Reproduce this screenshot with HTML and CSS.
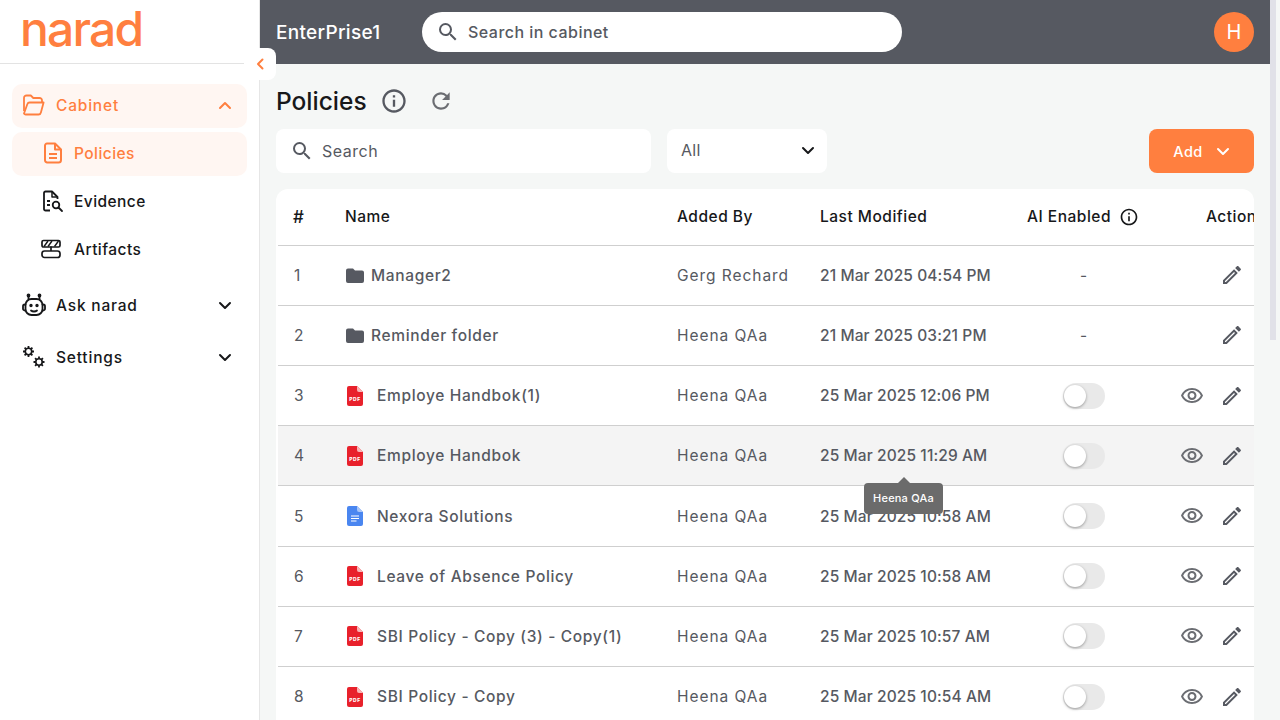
FILE: index.html
```html
<!DOCTYPE html>
<html lang="en">

<head>
    <meta name="viewport" content="width=device-width, initial-scale=1.0" />
    <title>Policies</title>
    <link rel="stylesheet" href="styles.css">
</head>

<body>
    <svg class="defs" width="0" height="0">
        <symbol id="i-folder" viewBox="0 0 18 15"><path fill="#565961" d="M2 0.500h5l2 2h7a2 2 0 0 1 2 2v8.500a2 2 0 0 1-2 2H2a2 2 0 0 1-2-2v-10.500a2 2 0 0 1 2-2z"/></symbol>
        <symbol id="i-pdf" viewBox="0 0 16 20"><path fill="#e8212b" d="M2 0h8l6 6v12a2 2 0 0 1-2 2H2a2 2 0 0 1-2-2V2a2 2 0 0 1 2-2z"/><path fill="#f9b5b5" d="M10 0l6 6h-4a2 2 0 0 1-2-2z"/><text x="8" y="15" font-family="Inter, sans-serif" font-size="5" font-weight="800" fill="#fff" text-anchor="middle">PDF</text></symbol>
        <symbol id="i-doc" viewBox="0 0 16 20"><path fill="#4a86f0" d="M2 0h8l6 6v12a2 2 0 0 1-2 2H2a2 2 0 0 1-2-2V2a2 2 0 0 1 2-2z"/><path fill="#a9c6f8" d="M10 0l6 6h-4a2 2 0 0 1-2-2z"/><path fill="#fff" d="M4 9.500h8v1H4zM4 12h8v1H4zM4 14.500h5.500v1H4z"/></symbol>
        <symbol id="i-eye" viewBox="0 0 24 24"><path fill="#6b6d72" d="M12 6a9.770 9.770 0 0 1 8.820 5.500C19.170 14.870 15.790 17 12 17s-7.170-2.130-8.820-5.500A9.770 9.770 0 0 1 12 6m0-2C7 4 2.730 7.110 1 11.500 2.730 15.890 7 19 12 19s9.270-3.110 11-7.500C21.270 7.110 17 4 12 4zm0 5a2.500 2.500 0 0 1 0 5 2.500 2.500 0 0 1 0-5m0-2c-2.480 0-4.500 2.020-4.500 4.500S9.520 16 12 16s4.500-2.020 4.500-4.500S14.480 7 12 7z"/></symbol>
        <symbol id="i-edit" viewBox="0 0 24 24"><path fill="#565961" d="M14.060 9.020l.92.920L5.920 19H5v-.92l9.060-9.060M17.660 3c-.25 0-.51.100-.7.290l-1.830 1.830 3.750 3.750 1.830-1.830c.39-.39.390-1.020 0-1.410l-2.340-2.340c-.2-.2-.45-.29-.71-.29zm-3.600 3.190L3 17.250V21h3.750L17.810 9.940l-3.750-3.750z"/></symbol>
        <symbol id="i-search" viewBox="0 0 24 24"><path fill="#565961" d="M15.500 14h-.79l-.28-.27A6.470 6.470 0 0 0 16 9.500 6.500 6.500 0 1 0 9.500 16c1.610 0 3.090-.59 4.230-1.570l.27.280v.79l5 4.990L20.490 19l-4.990-5zm-6 0C7.010 14 5 11.990 5 9.500S7.010 5 9.500 5 14 7.010 14 9.500 11.990 14 9.500 14z"/></symbol>
        <symbol id="i-info" viewBox="0 0 24 24"><path fill="currentColor" d="M11 7h2v2h-2zm0 4h2v6h-2zm1-9C6.480 2 2 6.480 2 12s4.480 10 10 10 10-4.480 10-10S17.520 2 12 2zm0 18c-4.410 0-8-3.590-8-8s3.590-8 8-8 8 3.590 8 8-3.590 8-8 8z"/></symbol>
        <symbol id="i-down" viewBox="0 0 14 9"><path fill="none" stroke="currentColor" stroke-width="2" stroke-linecap="round" stroke-linejoin="round" d="M2 2l5 5 5-5"/></symbol>
    </svg>

    <aside class="sidebar">
        <div class="logo-row"><span class="logo">narad</span></div>
        <button class="collapse-btn">
            <svg width="10" height="14" viewBox="0 0 10 14"><path fill="none" stroke="#ff7f3f" stroke-width="2" stroke-linecap="round" stroke-linejoin="round" d="M7.500 2.500L3 7l4.500 4.500"/></svg>
        </button>
        <nav class="nav">
            <div class="nav-item nav-parent active">
                <svg class="nav-icon" width="26" height="26" viewBox="0 0 26 26" fill="none" stroke="#ff7f3f" stroke-width="1.800" stroke-linejoin="round"><path d="M3 19V6a2.500 2.500 0 0 1 2.500-2.500h4.300l2.500 2.500h6.200A2.500 2.500 0 0 1 21 8.500V10"/><path d="M3 21.500l3.300-9.300A2.500 2.500 0 0 1 8.600 10.500h14l-2.700 10a2.500 2.500 0 0 1-2.400 2H5a2 2 0 0 1-2-1z"/></svg>
                <span>Cabinet</span>
                <svg class="caret flip" width="14" height="9"><use href="#i-down"/></svg>
            </div>
            <div class="nav-item nav-child active">
                <svg width="20" height="22" viewBox="0 0 20 22" fill="none" stroke="#ff7f3f" stroke-width="2" stroke-linejoin="round"><path d="M4 1.500h8l6 6V18a2.500 2.500 0 0 1-2.500 2.500h-11.500A2.500 2.500 0 0 1 2 18V3.500a2 2 0 0 1 2-2z"/><path d="M12 1.500V7.500h6M6 12h8M6 16h8"/></svg>
                <span>Policies</span>
            </div>
            <div class="nav-item nav-child">
                <svg width="22" height="23" viewBox="0 0 22 23" fill="none" stroke="#17181a" stroke-width="1.800" stroke-linejoin="round"><path d="M8 20.500H3.500A1.500 1.500 0 0 1 2 19V3a1.500 1.500 0 0 1 1.500-1.500H10l5.500 5.500v2"/><path d="M10 1.500V7h5.500" stroke-width="1.500"/><path d="M5 11h3M5 15h3"/><circle cx="14" cy="15" r="3.300"/><path d="M16.500 17.500l3.500 3.500" stroke-linecap="round"/></svg>
                <span>Evidence</span>
            </div>
            <div class="nav-item nav-child">
                <svg class="artifact-icon" width="22" height="20" viewBox="0 0 22 20" fill="none" stroke="#17181a" stroke-width="1.700" stroke-linejoin="round"><rect x="2" y="1.500" width="18" height="6.500" rx="1.500"/><path d="M4 7.500l4-5.500M8 7.500l4-5.500M14.500 7.500l4-5.500" stroke-width="1.400"/><path d="M11 12V7.500"/><rect x="2" y="12" width="18" height="6.500" rx="2.500"/></svg>
                <span>Artifacts</span>
            </div>
            <div class="nav-item nav-parent gap-top">
                <svg class="nav-icon" width="26" height="24" viewBox="0 0 26 24" fill="none" stroke="#17181a" stroke-width="1.800" stroke-linecap="round"><rect x="4.500" y="6" width="17" height="16" rx="6"/><path d="M4.500 11.500H3.800A1.800 1.800 0 0 0 2 13.300v2.400a1.800 1.800 0 0 0 1.800 1.800h.7M21.500 11.500h.7A1.800 1.800 0 0 1 24 13.300v2.400a1.800 1.800 0 0 1-1.800 1.800h-.7M7.500 6V3.500M18.500 6V3.500M10 17.500c1.500 1.300 4.500 1.300 6 0"/><circle cx="7.500" cy="2.500" r="1" fill="#17181a"/><circle cx="18.500" cy="2.500" r="1" fill="#17181a"/><circle cx="10" cy="12.500" r=".8" fill="#17181a"/><circle cx="16" cy="12.500" r=".8" fill="#17181a"/></svg>
                <span>Ask narad</span>
                <svg class="caret" width="14" height="9"><use href="#i-down"/></svg>
            </div>
            <div class="nav-item nav-parent settings">
                <svg class="nav-icon" width="26" height="26" viewBox="0 0 26 26" fill="none" stroke="#17181a" stroke-width="1.600" stroke-linejoin="round"><circle cx="7.500" cy="7.500" r="3.200"/><path d="M7.500 2v2.300M7.500 10.700V13M2 7.500h2.300M10.700 7.500H13M3.600 3.600l1.700 1.700M9.700 9.700l1.700 1.700M11.400 3.600L9.700 5.300M5.300 9.700l-1.700 1.700" stroke-width="1.800"/><circle cx="18" cy="18" r="3.200"/><path d="M18 12.500v2.300M18 21.200v2.300M12.500 18h2.300M21.200 18h2.300M14.100 14.100l1.700 1.700M20.200 20.200l1.700 1.700M21.900 14.100l-1.700 1.700M15.800 20.200l-1.700 1.700" stroke-width="1.800"/></svg>
                <span>Settings</span>
                <svg class="caret" width="14" height="9"><use href="#i-down"/></svg>
            </div>
        </nav>
    </aside>

    <div class="page">
        <header class="topbar">
            <div class="org-name">EnterPrise1</div>
            <div class="global-search">
                <svg width="24" height="24"><use href="#i-search"/></svg>
                <span>Search in cabinet</span>
            </div>
            <div class="avatar">H</div>
        </header>

        <main class="content">
            <div class="title-row">
                <h1>Policies</h1>
                <svg class="title-info" width="28" height="28"><use href="#i-info"/></svg>
                <svg class="title-refresh" width="26" height="26" viewBox="0 0 24 24"><path fill="#6b6d72" d="M17.650 6.350A7.958 7.958 0 0 0 12 4c-4.420 0-7.990 3.580-7.990 8s3.570 8 7.990 8c3.730 0 6.840-2.550 7.730-6h-2.080A5.990 5.990 0 0 1 12 18c-3.310 0-6-2.690-6-6s2.690-6 6-6c1.660 0 3.140.69 4.220 1.780L13 11h7V4l-2.350 2.350z"/></svg>
            </div>

            <div class="toolbar">
                <div class="search-box">
                    <svg width="24" height="24"><use href="#i-search"/></svg>
                    <span>Search</span>
                </div>
                <div class="filter-select">
                    <span>All</span>
                    <svg width="14" height="9"><use href="#i-down"/></svg>
                </div>
                <button class="add-btn">
                    <span>Add</span>
                    <svg width="14" height="9"><use href="#i-down"/></svg>
                </button>
            </div>

            <div class="table-card">
                <table>
                    <colgroup>
                        <col class="col-num"><col class="col-name"><col class="col-by"><col class="col-date"><col class="col-ai"><col class="col-action">
                    </colgroup>
                    <thead>
                        <tr>
                            <th class="cell-num">#</th>
                            <th>Name</th>
                            <th>Added By</th>
                            <th>Last Modified</th>
                            <th class="th-ai"><span>AI Enabled</span><svg width="20" height="20"><use href="#i-info"/></svg></th>
                            <th class="th-action">Action</th>
                        </tr>
                    </thead>
                    <tbody>
                        <tr>
                            <td class="cell-num">1</td>
                            <td><div class="file folder"><svg width="18" height="15"><use href="#i-folder"/></svg>Manager2</div></td>
                            <td class="cell-by">Gerg Rechard</td>
                            <td class="cell-date">21 Mar 2025 04:54 PM</td>
                            <td class="cell-dash">-</td>
                            <td><div class="actions"><svg width="24" height="24"><use href="#i-edit"/></svg></div></td>
                        </tr>
                        <tr>
                            <td class="cell-num">2</td>
                            <td><div class="file folder"><svg width="18" height="15"><use href="#i-folder"/></svg>Reminder folder</div></td>
                            <td class="cell-by">Heena QAa</td>
                            <td class="cell-date">21 Mar 2025 03:21 PM</td>
                            <td class="cell-dash">-</td>
                            <td><div class="actions"><svg width="24" height="24"><use href="#i-edit"/></svg></div></td>
                        </tr>
                        <tr>
                            <td class="cell-num">3</td>
                            <td><div class="file"><svg width="16" height="20"><use href="#i-pdf"/></svg>Employe Handbok(1)</div></td>
                            <td class="cell-by">Heena QAa</td>
                            <td class="cell-date">25 Mar 2025 12:06 PM</td>
                            <td><div class="switch"></div></td>
                            <td><div class="actions"><svg width="24" height="24"><use href="#i-eye"/></svg><svg width="24" height="24"><use href="#i-edit"/></svg></div></td>
                        </tr>
                        <tr class="hovered">
                            <td class="cell-num">4</td>
                            <td><div class="file"><svg width="16" height="20"><use href="#i-pdf"/></svg>Employe Handbok</div></td>
                            <td class="cell-by">Heena QAa</td>
                            <td class="cell-date">25 Mar 2025 11:29 AM</td>
                            <td><div class="switch"></div></td>
                            <td><div class="actions"><svg width="24" height="24"><use href="#i-eye"/></svg><svg width="24" height="24"><use href="#i-edit"/></svg></div></td>
                        </tr>
                        <tr>
                            <td class="cell-num">5</td>
                            <td><div class="file"><svg width="16" height="20"><use href="#i-doc"/></svg>Nexora Solutions</div></td>
                            <td class="cell-by">Heena QAa</td>
                            <td class="cell-date">25 Mar 2025 10:58 AM</td>
                            <td><div class="switch"></div></td>
                            <td><div class="actions"><svg width="24" height="24"><use href="#i-eye"/></svg><svg width="24" height="24"><use href="#i-edit"/></svg></div></td>
                        </tr>
                        <tr>
                            <td class="cell-num">6</td>
                            <td><div class="file"><svg width="16" height="20"><use href="#i-pdf"/></svg>Leave of Absence Policy</div></td>
                            <td class="cell-by">Heena QAa</td>
                            <td class="cell-date">25 Mar 2025 10:58 AM</td>
                            <td><div class="switch"></div></td>
                            <td><div class="actions"><svg width="24" height="24"><use href="#i-eye"/></svg><svg width="24" height="24"><use href="#i-edit"/></svg></div></td>
                        </tr>
                        <tr>
                            <td class="cell-num">7</td>
                            <td><div class="file"><svg width="16" height="20"><use href="#i-pdf"/></svg>SBI Policy - Copy (3) - Copy(1)</div></td>
                            <td class="cell-by">Heena QAa</td>
                            <td class="cell-date">25 Mar 2025 10:57 AM</td>
                            <td><div class="switch"></div></td>
                            <td><div class="actions"><svg width="24" height="24"><use href="#i-eye"/></svg><svg width="24" height="24"><use href="#i-edit"/></svg></div></td>
                        </tr>
                        <tr>
                            <td class="cell-num">8</td>
                            <td><div class="file"><svg width="16" height="20"><use href="#i-pdf"/></svg>SBI Policy - Copy</div></td>
                            <td class="cell-by">Heena QAa</td>
                            <td class="cell-date">25 Mar 2025 10:54 AM</td>
                            <td><div class="switch"></div></td>
                            <td><div class="actions"><svg width="24" height="24"><use href="#i-eye"/></svg><svg width="24" height="24"><use href="#i-edit"/></svg></div></td>
                        </tr>
                    </tbody>
                </table>
            </div>
        </main>
    </div>

    <div class="tooltip">Heena QAa</div>
    <div class="scroll-track"><div class="scroll-thumb"></div></div>
</body>

</html>
```

FILE: styles.css
```css
* {
    box-sizing: border-box;
}

html,
body {
    height: 720px;
    margin: 0;
    overflow: hidden;
}

body {
    display: flex;
    font-family: Inter, "Noto Sans", sans-serif;
    background-color: #f5f7f6;
    color: #565961;
    font-size: 16px;
}

.defs {
    position: absolute;
}

/* sidebar */
.sidebar {
    position: relative;
    z-index: 2;
    width: 260px;
    flex-shrink: 0;
    background-color: #fff;
    border-right: 1px solid #e6e6e6;
}

.logo-row {
    height: 64px;
    padding-left: 20px;
    border-bottom: 1px solid #e3e3e3;
}

.logo {
    display: block;
    font-size: 48px;
    font-weight: 500;
    line-height: 58px;
    color: #ff7f3f;
    letter-spacing: -1.800px;
}

.collapse-btn {
    position: absolute;
    top: 48px;
    left: 244px;
    width: 32px;
    height: 32px;
    padding: 0;
    display: flex;
    align-items: center;
    justify-content: center;
    background-color: #fff;
    border: none;
    border-radius: 8px;
}

.nav {
    padding: 20px 12px 0;
}

.nav-item {
    display: flex;
    align-items: center;
    font-weight: 500;
    color: #17181a;
    font-size: 15.500px;
    border-radius: 10px;
    padding-bottom: 2px;
}

.nav-parent {
    height: 44px;
    padding-left: 9px;
    padding-right: 15px;
    gap: 9px;
    letter-spacing: 0.800px;
}

.nav-parent span {
    flex: 1;
}

.nav-child {
    height: 44px;
    margin-top: 4px;
    padding-left: 30px;
    gap: 10px;
    letter-spacing: 0.450px;
}

.nav-child svg {
    width: 22px;
    flex-shrink: 0;
}

.nav-child .artifact-icon {
    margin: 0 2px 0 -2px;
}

.nav-item.active {
    background-color: #fff6f2;
    color: #ff7f3f;
}

.gap-top {
    margin-top: 12px;
}

.settings {
    margin-top: 8px;
}

.caret {
    color: #17181a;
}

.active .caret {
    color: #ff7f3f;
}

.flip {
    transform: rotate(180deg);
}

/* top bar */
.page {
    width: 1010px;
    flex-shrink: 0;
}

.topbar {
    height: 64px;
    display: flex;
    align-items: center;
    padding: 0 16px;
    background-color: #565961;
}

.org-name {
    width: 146px;
    color: #fff;
    font-size: 19px;
    font-weight: 500;
    letter-spacing: 0.300px;
}

.global-search {
    width: 480px;
    height: 40px;
    display: flex;
    align-items: center;
    gap: 8px;
    padding-left: 14px;
    background-color: #fff;
    border-radius: 20px;
    font-weight: 500;
    letter-spacing: 0.470px;
}

.avatar {
    width: 40px;
    height: 40px;
    margin-left: auto;
    display: flex;
    align-items: center;
    justify-content: center;
    background-color: #ff7f3f;
    border-radius: 50%;
    color: #fff;
    font-size: 20px;
}

/* content */
.content {
    padding: 0 16px;
}

.title-row {
    height: 65px;
    padding-top: 8px;
    display: flex;
    align-items: center;
}

.title-row h1 {
    margin: 0 13px 0 0;
    font-size: 24.500px;
    font-weight: 500;
    color: #17181a;
}

.title-info {
    color: #565961;
}

.title-refresh {
    margin-left: 20px;
}

.toolbar {
    display: flex;
    align-items: center;
    gap: 16px;
}

.search-box {
    width: 375px;
    height: 44px;
    display: flex;
    align-items: center;
    gap: 8px;
    padding-left: 14px;
    background-color: #fff;
    border-radius: 8px;
    letter-spacing: 0.500px;
}

.filter-select {
    width: 160px;
    height: 44px;
    display: flex;
    align-items: center;
    justify-content: space-between;
    padding: 0 12px 2px 14px;
    background-color: #fff;
    border-radius: 8px;
    letter-spacing: 0.300px;
}

.filter-select svg {
    color: #17181a;
}

.add-btn {
    width: 105px;
    height: 44px;
    margin-left: auto;
    display: flex;
    align-items: center;
    justify-content: center;
    gap: 13px;
    border: none;
    border-radius: 8px;
    background-color: #ff7f3f;
    color: #fff;
    font-family: inherit;
    font-size: 14.500px;
    font-weight: 500;
    letter-spacing: 0.400px;
}

/* table */
.table-card {
    margin-top: 16px;
    height: 600px;
    overflow: hidden;
    background-color: #fff;
    border-radius: 12px 12px 0 0;
    padding-left: 2px;
}

table {
    width: 1000px;
    table-layout: fixed;
    border-collapse: collapse;
}

.col-num { width: 67px; }
.col-name { width: 332px; }
.col-by { width: 143px; }
.col-date { width: 207px; }
.col-ai { width: 135px; }
.col-action { width: 116px; }

th {
    height: 56.200px;
    padding: 0;
    text-align: left;
    font-size: 15.500px;
    font-weight: 500;
    color: #17181a;
    letter-spacing: 0.500px;
    border-bottom: 1px solid #cfcfcf;
}

td {
    height: 60.200px;
    padding: 0;
    font-size: 15.500px;
    border-bottom: 1px solid #cfcfcf;
    white-space: nowrap;
}

.cell-num {
    padding-left: 15px;
}

td.cell-num {
    padding-left: 16px;
}

th.cell-num {
    font-size: 17px;
}

.cell-by {
    letter-spacing: 0.950px;
}

.cell-date {
    font-weight: 500;
    letter-spacing: 0.100px;
}

td.cell-dash {
    padding-left: 53px;
}

.th-ai span {
    vertical-align: middle;
}

.th-ai svg {
    margin-left: 8px;
    vertical-align: middle;
}

.th-action {
    padding-left: 44px;
    overflow: visible;
}

.hovered td {
    background-color: #f4f4f4;
}

.file {
    display: flex;
    align-items: center;
    gap: 14px;
    font-weight: 500;
    letter-spacing: 0.650px;
}

.file svg {
    margin-left: 2px;
}

.folder {
    gap: 7px;
}

.folder svg {
    margin-left: 1px;
}

.switch {
    position: relative;
    width: 42px;
    height: 26px;
    margin-left: 36px;
    background-color: #e9e9e9;
    border-radius: 13px;
}

.switch::after {
    content: "";
    position: absolute;
    top: 2px;
    left: 1px;
    width: 22px;
    height: 22px;
    background-color: #fff;
    border-radius: 50%;
    box-shadow: 0 1px 3px rgba(0, 0, 0, 0.35);
}

.actions {
    display: flex;
    justify-content: flex-end;
    gap: 16px;
    width: 82px;
}

/* floating bits */
.tooltip {
    position: absolute;
    top: 483px;
    left: 864px;
    width: 79px;
    height: 31px;
    padding-bottom: 1px;
    display: flex;
    align-items: center;
    justify-content: center;
    background-color: #6b6b6b;
    border-radius: 4px;
    color: #fff;
    font-size: 11px;
    font-weight: 500;
    letter-spacing: 0.200px;
}

.tooltip::before {
    content: "";
    position: absolute;
    top: -6px;
    left: 34px;
    border-left: 6px solid transparent;
    border-right: 6px solid transparent;
    border-bottom: 6px solid #6b6b6b;
}

.scroll-track {
    position: absolute;
    top: 0;
    right: 0;
    width: 10px;
    height: 720px;
    background-color: #f5f7f6;
}

.scroll-thumb {
    width: 6px;
    height: 340px;
    background-color: #e1e1e8;
}
```
